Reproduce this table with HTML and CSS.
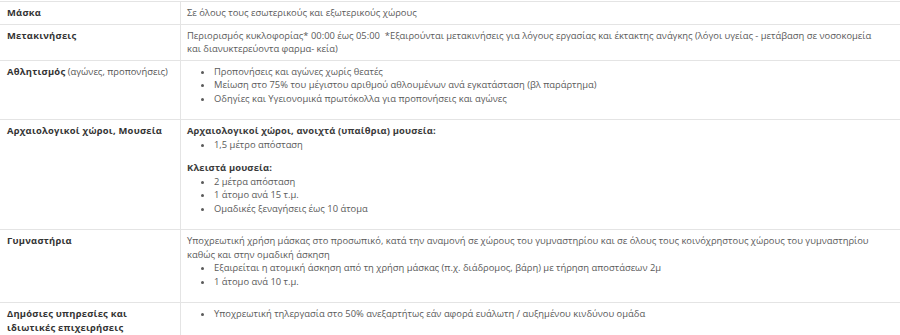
FILE: index.html
```html
<!DOCTYPE html>
<html lang="el">
<head>
<meta charset="utf-8">
<link rel="stylesheet" href="styles.css">
</head>
<body>
<table class="measures">
  <tr>
    <td class="label"><strong>Μάσκα</strong></td>
    <td class="value">Σε όλους τους εσωτερικούς και εξωτερικούς χώρους</td>
  </tr>
  <tr>
    <td class="label"><strong>Μετακινήσεις</strong></td>
    <td class="value">Περιορισμός κυκλοφορίας* 00:00 έως 05:00 &nbsp;*Εξαιρούνται μετακινήσεις για λόγους εργασίας και έκτακτης ανάγκης (λόγοι υγείας - μετάβαση σε νοσοκομεία<br>και διανυκτερεύοντα φαρμα- κεία)</td>
  </tr>
  <tr>
    <td class="label"><strong>Αθλητισμός</strong> (αγώνες, προπονήσεις)</td>
    <td class="value">
      <ul>
        <li>Προπονήσεις και αγώνες χωρίς θεατές</li>
        <li>Μείωση στο 75% του μέγιστου αριθμού αθλουμένων ανά εγκατάσταση (βλ παράρτημα)</li>
        <li>Οδηγίες και Υγειονομικά πρωτόκολλα για προπονήσεις και αγώνες</li>
      </ul>
    </td>
  </tr>
  <tr>
    <td class="label"><strong>Αρχαιολογικοί χώροι, Μουσεία</strong></td>
    <td class="value">
      <p class="head">Αρχαιολογικοί χώροι, ανοιχτά (υπαίθρια) μουσεία:</p>
      <ul>
        <li>1,5 μέτρο απόσταση</li>
      </ul>
      <p class="head">Κλειστά μουσεία:</p>
      <ul>
        <li>2 μέτρα απόσταση</li>
        <li>1 άτομο ανά 15 τ.μ.</li>
        <li>Ομαδικές ξεναγήσεις έως 10 άτομα</li>
      </ul>
    </td>
  </tr>
  <tr>
    <td class="label"><strong>Γυμναστήρια</strong></td>
    <td class="value">Υποχρεωτική χρήση μάσκας στο προσωπικό, κατά την αναμονή σε χώρους του γυμναστηρίου και σε όλους τους κοινόχρηστους χώρους του γυμναστηρίου καθώς και στην ομαδική άσκηση
      <ul>
        <li>Εξαιρείται η ατομική άσκηση από τη χρήση μάσκας (π.χ. διάδρομος, βάρη) με τήρηση αποστάσεων 2μ</li>
        <li>1 άτομο ανά 10 τ.μ.</li>
      </ul>
    </td>
  </tr>
  <tr>
    <td class="label"><strong>Δημόσιες υπηρεσίες και ιδιωτικές επιχειρήσεις</strong></td>
    <td class="value">
      <ul>
        <li>Υποχρεωτική τηλεργασία στο 50% ανεξαρτήτως εάν αφορά ευάλωτη / αυξημένου κινδύνου ομάδα</li>
      </ul>
    </td>
  </tr>
</table>
</body>
</html>
```
FILE: styles.css
```css
html, body {
  margin: 0;
  padding: 0;
  background: #ffffff;
}
body {
  padding-top: 1px;
  font-family: "Open Sans", "Noto Sans", sans-serif;
  font-size: 9.4px;
  line-height: 13.5px;
  color: #5a5a5a;
}
.measures {
  width: 900px;
  border-collapse: collapse;
  border-bottom: 1px solid #e4e4e4;
}
.measures td {
  border-top: 1px solid #e4e4e4;
  padding: 4px 6px 4px 6px;
  vertical-align: top;
}
.measures td.label {
  width: 167px;
  padding-left: 7px;
  border-right: 1px solid #e4e4e4;
  color: #555;
}
.measures td.label strong {
  color: #333;
  font-weight: 700;
  letter-spacing: 0.25px;
}
.measures td.value {
  padding-left: 6px;
}
.measures ul {
  margin: 0 0 10px 0;
  padding-left: 27px;
}
.measures p {
  margin: 0;
}
.measures p.head {
  font-weight: 700;
  color: #3a3a3a;
  letter-spacing: 0.15px;
}
```
